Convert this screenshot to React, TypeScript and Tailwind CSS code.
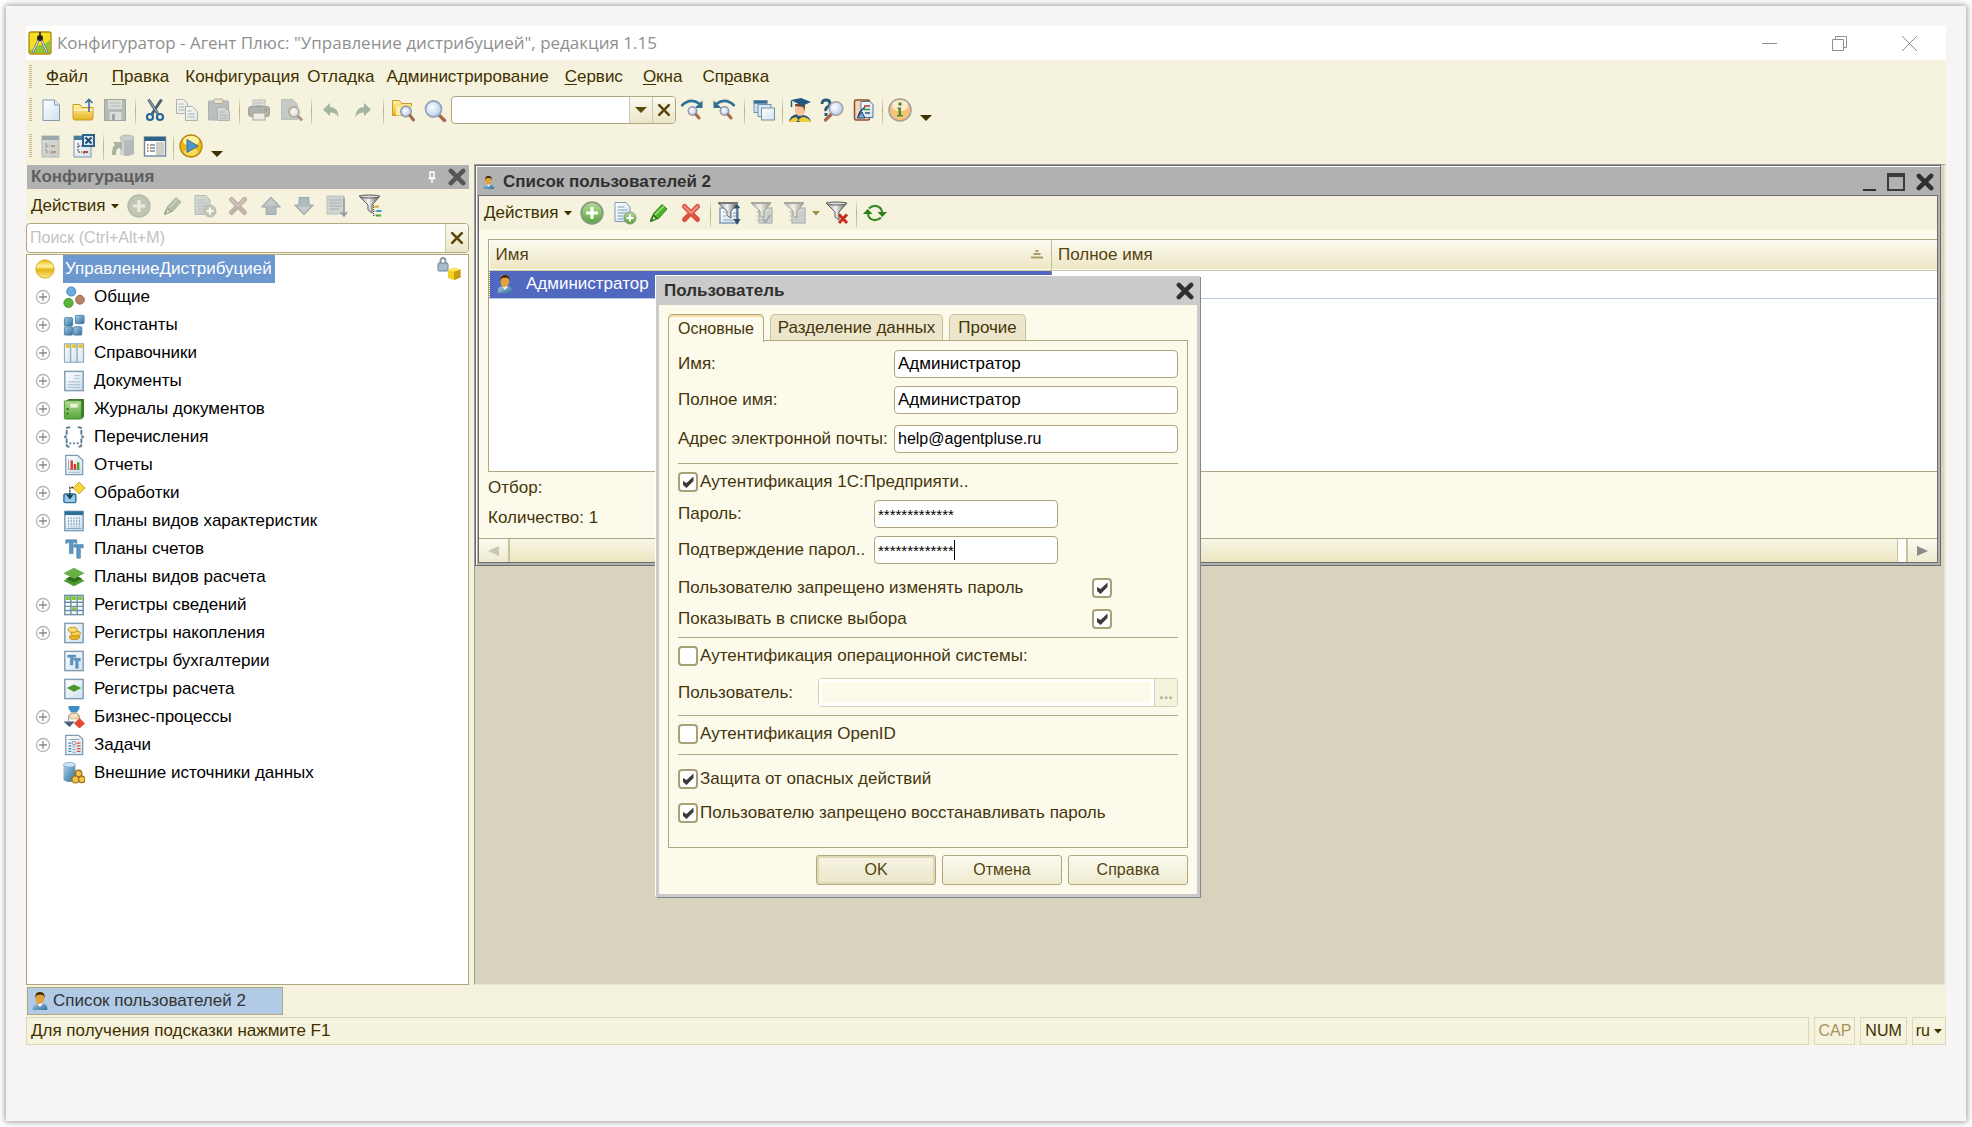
import type { ReactNode } from "react";

type IconProps = { muted?: boolean };

function Icon({ size = 24, muted, children }: { size?: number; muted?: boolean; children: ReactNode }) {
  return (
    <svg
      width={size}
      height={size}
      viewBox="0 0 24 24"
      fill="none"
      aria-hidden="true"
      className={muted ? "shrink-0 opacity-60 saturate-50" : "shrink-0"}
    >
      {children}
    </svg>
  );
}

/* ---------- shared gradients ---------- */

function Gradients() {
  return (
    <svg width="0" height="0" className="absolute" aria-hidden="true">
      <defs>
        <linearGradient id="g-page" x1="0" y1="0" x2="1" y2="1">
          <stop offset="0" stopColor="#ffffff" />
          <stop offset="1" stopColor="#cfe1ee" />
        </linearGradient>
        <linearGradient id="g-slate" x1="0" y1="0" x2="1" y2="1">
          <stop offset="0" stopColor="#c3cdd4" />
          <stop offset="1" stopColor="#a9b7c2" />
        </linearGradient>
        <linearGradient id="g-gold" x1="0" y1="0" x2="0" y2="1">
          <stop offset="0" stopColor="#fff3a8" />
          <stop offset="1" stopColor="#e6b422" />
        </linearGradient>
        <linearGradient id="g-steel" x1="0" y1="0" x2="1" y2="0">
          <stop offset="0" stopColor="#8d8d8d" />
          <stop offset="0.45" stopColor="#f4f4f4" />
          <stop offset="1" stopColor="#555555" />
        </linearGradient>
        <linearGradient id="g-green" x1="0" y1="0" x2="0" y2="1">
          <stop offset="0" stopColor="#b5dd95" />
          <stop offset="1" stopColor="#55a538" />
        </linearGradient>
        <linearGradient id="g-blue" x1="0" y1="0" x2="1" y2="1">
          <stop offset="0" stopColor="#a9cfe8" />
          <stop offset="1" stopColor="#2f6c9b" />
        </linearGradient>
        <linearGradient id="g-ball" x1="0" y1="0" x2="0" y2="1">
          <stop offset="0" stopColor="#e8b912" />
          <stop offset="0.35" stopColor="#fff3a0" />
          <stop offset="0.55" stopColor="#e3b413" />
          <stop offset="1" stopColor="#ffec8c" />
        </linearGradient>
        <radialGradient id="g-lens" cx="0.4" cy="0.4" r="0.7">
          <stop offset="0" stopColor="#ffffff" />
          <stop offset="1" stopColor="#a9c6ee" />
        </radialGradient>
      </defs>
    </svg>
  );
}

/* ---------- toolbar icons ---------- */

function AppIcon() {
  return (
    <Icon>
      <rect x="1" y="1" width="22" height="22" rx="2" fill="#f3df1f" stroke="#b48a14" strokeWidth="1.4" />
      <path d="M2 19c5 0 6-4 10-5 4-1 6-1 10-5v13H2z" fill="#8cc63a" />
      <path d="M11 8 5 21M13 8l6 13" stroke="#777" strokeWidth="2.4" strokeLinecap="round" />
      <path d="M11 8 5 21M13 8l6 13" stroke="#e8e8e8" strokeWidth="1" strokeLinecap="round" />
      <circle cx="12" cy="7" r="3" fill="#222" />
      <path d="M12 1v5" stroke="#222" strokeWidth="1.6" />
    </Icon>
  );
}

function NewFileIcon() {
  return (
    <Icon>
      <path d="M4 2h11.500l5 5v15.500H4z" fill="url(#g-page)" stroke="#7f9db3" />
      <path d="M15.500 2v5h5" fill="#e5eff6" stroke="#7f9db3" />
    </Icon>
  );
}

function OpenIcon() {
  return (
    <Icon>
      <path d="M2 6.500h7l2 3h11V20q0 2-2 2H4q-2 0-2-2z" fill="url(#g-gold)" stroke="#c99a2a" />
      <path d="M2.500 12h19" stroke="#fff7c8" strokeWidth="1.500" />
      <path d="M18 14V2M14.500 5 18 1.500 21.500 5" stroke="#3d6f93" strokeWidth="1.600" />
    </Icon>
  );
}

function SaveIcon({ muted }: IconProps) {
  return (
    <Icon muted={muted}>
      <rect x="1.500" y="1.500" width="21" height="21" fill="#7e97ab" stroke="#5d768a" />
      <rect x="5" y="2" width="14" height="9" fill="#c3ced6" />
      <path d="M6.500 5h11M6.500 8h11" stroke="#8498a8" />
      <rect x="6.500" y="14" width="12" height="8" fill="#c4d0d9" />
      <rect x="9" y="16" width="3" height="6" fill="#5d768a" />
    </Icon>
  );
}

function CutIcon() {
  return (
    <Icon>
      <path d="M5.500 1.500 15 16M18.500 1.500 9 16" stroke="#4c6273" strokeWidth="3" />
      <path d="M6 2l9 14" stroke="#a7b8c4" />
      <circle cx="7" cy="19" r="3" stroke="#25699b" strokeWidth="2.200" />
      <circle cx="17" cy="19" r="3" stroke="#25699b" strokeWidth="2.200" />
    </Icon>
  );
}

function CopyIcon({ muted }: IconProps) {
  return (
    <Icon muted={muted}>
      <path d="M1.500 1.500h7l4 4v10h-11z" fill="url(#g-page)" stroke="#6d8ca6" />
      <path d="M3.500 6h5M3.500 9h6M3.500 12h6" stroke="#5c8fb8" />
      <path d="M10.500 8.500h7l5 5v9h-12z" fill="url(#g-page)" stroke="#6d8ca6" />
      <path d="M12.500 13h4M12.500 16h7M12.500 19h7" stroke="#5c8fb8" />
    </Icon>
  );
}

function PasteIcon({ muted }: IconProps) {
  return (
    <Icon muted={muted}>
      <rect x="1.500" y="3" width="20" height="19" rx="1" fill="#8ba0b3" stroke="#718799" />
      <rect x="7" y="1" width="9" height="4.500" rx="1" fill="#e8d9a8" stroke="#8d7c50" />
      <path d="M10.500 9.500h7l5 4v9h-12z" fill="url(#g-slate)" stroke="#6d8ca6" />
      <path d="M12.500 14h5M12.500 17h7M12.500 20h7" stroke="#5c8fb8" />
    </Icon>
  );
}

function PrintIcon({ muted }: IconProps) {
  return (
    <Icon muted={muted}>
      <rect x="6" y="2" width="12" height="8" fill="#cbd3d8" stroke="#8b9aa6" />
      <path d="M8 5h8M8 7.500h8" stroke="#8b9aa6" />
      <rect x="1.500" y="8.500" width="21" height="10" rx="2.500" fill="#7b8a96" stroke="#5f6d78" />
      <circle cx="18.500" cy="12" r="1.500" fill="#c45b3b" />
      <rect x="6" y="15" width="12" height="7" fill="#e6eaf0" stroke="#a0704a" />
    </Icon>
  );
}

function PreviewIcon({ muted }: IconProps) {
  return (
    <Icon muted={muted}>
      <path d="M2.500 1.500h11l5 5v15h-16z" fill="#9fb2c0" stroke="#8ba2b3" />
      <circle cx="15" cy="14" r="5" fill="url(#g-lens)" stroke="#8d6f62" strokeWidth="1.600" />
      <path d="m19 18 4 4.500" stroke="#a0563a" strokeWidth="3" />
    </Icon>
  );
}

function UndoIcon({ flip }: { flip?: boolean }) {
  return (
    <Icon>
      <g transform={flip ? "translate(24 0) scale(-1 1)" : undefined}>
        <path d="M4 11.500 11 5v4q8.500 0 8.500 10.500-2-5-8.500-5V18z" fill="#a3b5a0" />
      </g>
    </Icon>
  );
}

function FindInFilesIcon() {
  return (
    <Icon>
      <path d="M1.500 2.500h7l2 3h10v12h-19z" fill="url(#g-gold)" stroke="#c99a2a" />
      <path d="M5 8.500h16v9h-16z" fill="#fdeeb0" />
      <circle cx="15" cy="13.500" r="5.200" fill="url(#g-lens)" stroke="#8f9dae" strokeWidth="1.600" />
      <path d="m19 17.500 3.500 4.500" stroke="#a4684f" strokeWidth="3" strokeLinecap="round" />
    </Icon>
  );
}

function FindIcon() {
  return (
    <Icon>
      <path d="m16 17 5.500 5.500" stroke="#a4684f" strokeWidth="3.400" strokeLinecap="round" />
      <circle cx="10.500" cy="11" r="8" fill="url(#g-lens)" stroke="#98a3b8" strokeWidth="1.800" />
    </Icon>
  );
}

function FindNextIcon({ flip }: { flip?: boolean }) {
  return (
    <Icon>
      <g transform={flip ? "translate(24 0) scale(-1 1)" : undefined}>
        <path d="M1.500 8Q10-1 20 6" stroke="#2f6f96" strokeWidth="2.600" />
        <path d="M22.500 2.500v7.500h-8z" fill="#2f6f96" />
      </g>
      <circle cx="12.500" cy="13" r="4.200" fill="url(#g-lens)" stroke="#9898b0" strokeWidth="1.600" />
      <path d="m16 16.500 3 3.500" stroke="#a4684f" strokeWidth="3" strokeLinecap="round" />
    </Icon>
  );
}

function WindowsIcon() {
  return (
    <Icon>
      <g stroke="#6f93ab">
        <rect x="2" y="2.500" width="13" height="12" fill="#cfe0ec" />
        <rect x="2" y="2.500" width="13" height="3" fill="#34688c" />
        <rect x="6" y="6.500" width="13" height="12" fill="#dbe9f2" />
        <rect x="9.500" y="10" width="13" height="12" fill="url(#g-page)" />
      </g>
    </Icon>
  );
}

function GraduateIcon() {
  return (
    <Icon>
      <path d="M1 24q1-7 8-8l6 1q7 1 8 7z" fill="#2c5672" />
      <path d="M1 24q2-4 7-5l4 5zM23 24q-3-5-9-5l-6 5z" fill="#f4cb3a" />
      <path d="M7 7h10v6q-1 5-5 5t-5-5z" fill="#f2c39c" />
      <path d="M17 8v5l-2-4-8-1V6h10z" fill="#7c4a26" />
      <path d="M3 2 13 0l10 4-9 4z" fill="#21597f" />
      <path d="M3.500 2.500V9" stroke="#21597f" strokeWidth="1.500" />
    </Icon>
  );
}

function SyntaxHelpIcon() {
  return (
    <Icon>
      <path d="M2 6q0-4 4-4t4 3.500q0 2-2.500 3.500T6 13" stroke="#27587a" strokeWidth="2.800" />
      <rect x="4.500" y="15" width="3" height="3" fill="#27587a" />
      <path d="m11.500 16-6 6" stroke="#a4684f" strokeWidth="3.200" strokeLinecap="round" />
      <circle cx="16" cy="10.500" r="6.800" fill="url(#g-lens)" stroke="#a7a1a8" strokeWidth="1.600" />
    </Icon>
  );
}

function TemplatesIcon() {
  return (
    <Icon>
      <rect x="2.500" y="2" width="15" height="20" rx="1.500" fill="#f2d5b8" stroke="#8c5330" strokeWidth="1.500" />
      <path d="M9 3.500h9l3 3v13H9z" fill="url(#g-page)" stroke="#4f7896" />
      <path d="M12 8h6" stroke="#d33b2f" strokeWidth="1.600" />
      <path d="M12 11.500h6" stroke="#3c9a3a" strokeWidth="1.600" />
      <path d="M13 15h5" stroke="#2f5c84" strokeWidth="1.600" />
      <path d="m6 19 2-5 5-5" stroke="#1d4a76" strokeWidth="1.600" />
      <path d="M5 20h8l-3-6z" fill="#7fa9cc" stroke="#1d4a76" />
    </Icon>
  );
}

function InfoIcon() {
  return (
    <Icon>
      <circle cx="12" cy="12" r="11" fill="#f7c37a" stroke="#a5a096" strokeWidth="1.600" />
      <ellipse cx="12" cy="7.500" rx="8" ry="5.500" fill="#fdebcf" />
      <circle cx="12" cy="6" r="1.800" fill="#4e8d2c" />
      <path d="M9.500 9.500H13V17h2v1.500H9V17h1.500v-6h-1z" fill="#4e8d2c" />
    </Icon>
  );
}

function ConfigTreeIcon({ muted, close }: IconProps & { close?: boolean }) {
  return (
    <Icon muted={muted}>
      <rect x="3" y="2" width="17" height="21" fill={muted ? "url(#g-slate)" : "url(#g-page)"} stroke="#7b98ad" />
      <rect x="3" y="2" width="17" height="4" fill="#4f7c9c" />
      <path d="M7 9v9h4M7 12h4M13 18v3" stroke="#444" strokeDasharray="2 1" />
      <path d="M12 12h4M12 18h5" stroke="#c0502e" strokeWidth="2" />
      {close && (
        <g>
          <rect x="11" y="0" width="13" height="13" fill="#2f6288" />
          <rect x="13" y="2" width="9" height="9" fill="#d7e7f2" />
          <path d="m14.500 3.500 6 6M20.500 3.500l-6 6" stroke="#1e4c70" strokeWidth="2" />
        </g>
      )}
    </Icon>
  );
}

function DbUpdateIcon({ muted }: IconProps) {
  return (
    <Icon muted={muted}>
      <path d="M9 4v16q6 4 14 0V4z" fill="#7c98b0" />
      <path d="M9 4v16q2 1.500 4 2V6z" fill="#b4c8d8" />
      <ellipse cx="16" cy="4" rx="7" ry="3" fill="#a3b9ca" stroke="#7c98b0" />
      <path d="M1 21Q1 12 4 11L2 8h9v8l-3-2q-3 0-3 7z" fill="#6f8f68" />
    </Icon>
  );
}

function FormIcon() {
  return (
    <Icon>
      <rect x="1.500" y="3" width="21" height="19" fill="#fff" stroke="#6c8ba2" strokeWidth="1.400" />
      <rect x="1.500" y="3" width="21" height="4" fill="#2e6387" />
      <rect x="13" y="8" width="8" height="13" fill="#d0cec4" />
      <path d="M4 11h1.500M4 14h1.500M4 17h1.500" stroke="#c05530" strokeWidth="1.400" />
      <path d="M7 11h5M7 14h5M7 17h5" stroke="#7d8b95" strokeWidth="1.400" />
    </Icon>
  );
}

function RunIcon() {
  return (
    <Icon>
      <circle cx="12" cy="12" r="11" fill="#eab913" stroke="#b98a16" strokeWidth="1.400" />
      <ellipse cx="12" cy="7" rx="8" ry="5" fill="#fdf0a0" />
      <ellipse cx="12" cy="18" rx="7" ry="3.500" fill="#f9dd5c" />
      <path d="M8 5.500v13l11-6.500z" fill="#4e96ca" stroke="#3a6f98" />
    </Icon>
  );
}

function AddIcon({ muted }: IconProps) {
  return (
    <Icon muted={muted}>
      <circle cx="12" cy="12" r="10.800" fill={muted ? "#93b088" : "url(#g-green)"} stroke="#8b9a86" strokeWidth="1.800" />
      <path d="M12 6v12M6 12h12" stroke={muted ? "#e2e8da" : "#fff"} strokeWidth="3.200" />
    </Icon>
  );
}

function EditIcon({ muted }: IconProps) {
  return (
    <Icon muted={muted}>
      <path d="m7 13 9-9.500 5 4.500-9 10z" fill={muted ? "#7fa074" : "#4bb427"} stroke={muted ? "#6f9062" : "#2f7f18"} />
      <path d="m9 14 9-9" stroke={muted ? "#a8c09f" : "#9be07c"} strokeWidth="1.400" />
      <path d="m7 13 5 5-7 3q-1.500 0-1-2z" fill={muted ? "#5f7f56" : "#2a7416"} />
      <path d="m7.500 15.500 2 2-3 1.500z" fill="#e6f5dc" />
    </Icon>
  );
}

function AddCopyIcon({ muted }: IconProps) {
  return (
    <Icon muted={muted}>
      <path d="M2 1.500h11l4 4.500v14.500H2z" fill={muted ? "url(#g-slate)" : "url(#g-page)"} stroke="#7d9bb0" />
      <path d="M4.500 6h7M4.500 9h10M4.500 12h9M4.500 15h6M4.500 18h6" stroke="#7da0b8" strokeWidth="1.200" />
      <circle cx="17" cy="17" r="6" fill={muted ? "#93b088" : "url(#g-green)"} stroke="#7c9a74" />
      <path d="M17 13.500v7M13.500 17h7" stroke="#fff" strokeWidth="2" />
    </Icon>
  );
}

function DeleteIcon({ muted }: IconProps) {
  return (
    <Icon muted={muted}>
      <path d="m5.500 5.500 13 13M18.500 5.500l-13 13" stroke={muted ? "#b0837e" : "#de5340"} strokeWidth="5" strokeLinecap="round" />
      <path d="m5.500 5.500 6.500 6.500 6.500-6.500" stroke={muted ? "#c9a09a" : "#f0907f"} strokeWidth="2" strokeLinecap="round" />
    </Icon>
  );
}

function ArrowIcon({ down }: { down?: boolean }) {
  return (
    <Icon muted>
      <g transform={down ? "translate(0 24) scale(1 -1)" : undefined}>
        <path d="m12 3 9.500 10H17v7.500H7V13H2.500z" fill="#6f9ac2" stroke="#557fa6" />
        <path d="m12 4.500 6 7H6z" fill="#94b4d0" />
      </g>
    </Icon>
  );
}

function SortIcon() {
  return (
    <Icon muted>
      <rect x="2" y="2" width="17" height="18" fill="#b0c2d0" stroke="#8ba5b9" />
      <path d="M4.500 6h12M4.500 9h12M4.500 12h12M4.500 15h10" stroke="#6888a0" />
      <path d="M19 4v17M16 18l3 4 3-4" stroke="#3d6890" strokeWidth="1.600" />
    </Icon>
  );
}

const FUNNEL = "M1 2h21l-8 9v8l-4-3v-5z";

function FunnelTreeIcon() {
  return (
    <Icon>
      <path d={FUNNEL} fill="url(#g-steel)" stroke="#5c5c5c" />
      <ellipse cx="11.500" cy="2.500" rx="10" ry="1.500" fill="#ddd" stroke="#5c5c5c" />
      <path d="M15.500 11v11M15.500 13h3M15.500 17h3M15.500 21h3" stroke="#555" strokeDasharray="1 1" />
      <path d="M17 12.500h4" stroke="#e0b020" strokeWidth="2" />
      <path d="M18.500 17h5" stroke="#3c97cf" strokeWidth="2" />
      <path d="M18 21.500h5" stroke="#49a83b" strokeWidth="2" />
    </Icon>
  );
}

function FunnelListIcon({ muted, variant }: IconProps & { variant: "sort" | "check" | "list" }) {
  return (
    <Icon muted={muted}>
      <rect
        x={variant === "sort" ? 3 : 9}
        y="7"
        width={variant === "sort" ? 18 : 13}
        height="15"
        fill={muted ? "url(#g-slate)" : "url(#g-page)"}
        stroke="#7d97ab"
        strokeWidth="1.400"
      />
      <path d="M6 11h3M6 15h3M6 19h12M16 12h4M16 15h4" stroke="#8da6b8" />
      <path d="M1 2h20l-7 8v7l-4-2.500V10z" fill="url(#g-steel)" stroke="#666" />
      <path d="M1 2h20" stroke="#777" strokeWidth="2" />
      {variant === "sort" && <path d="M20 5v14M17.500 18.500l2.500 4 2.500-4zM17.500 7 20 4l2.500 3" fill="#2c5270" stroke="#2c5270" strokeWidth="1.200" />}
      {variant === "check" && <path d="m13 18 2.500 3 5-7" stroke="#5b7f9b" strokeWidth="2" />}
    </Icon>
  );
}

function FunnelClearIcon() {
  return (
    <Icon>
      <path d={FUNNEL} fill="url(#g-steel)" stroke="#5c5c5c" />
      <ellipse cx="11.500" cy="2.500" rx="10" ry="1.500" fill="#ddd" stroke="#5c5c5c" />
      <path d="m14 13.500 8 8.500M22 13.500 14 22" stroke="#cc2b20" strokeWidth="3" />
    </Icon>
  );
}

function RefreshIcon() {
  return (
    <Icon>
      <path d="M6 7.500Q9 4.500 13 5q5.500 1 6 6" stroke="#388a22" strokeWidth="2.200" />
      <path d="M18 16.500Q15 19.500 11 19 5.500 18 5 13" stroke="#388a22" strokeWidth="2.200" />
      <path d="M14.500 11H24l-4.700 5zM0 13h9.500L4.700 8z" fill="#2f7f1c" />
    </Icon>
  );
}

function UserIcon({ size = 18 }: { size?: number }) {
  return (
    <Icon size={size}>
      <path d="M2 24q0-8 6-9h8q6 1 6 9z" fill="url(#g-blue)" />
      <path d="m8 15 4 5 4-5z" fill="#fff" />
      <path d="M12 0q6 0 6 7t-6 9-6-9 6-7" fill="#e3a13c" />
      <path d="M6 8Q5 0 12 0t6 8q-1-4-3-4.500H9Q7 4 6 8" fill="#3b2a18" />
    </Icon>
  );
}

/* ---------- metadata tree icons ---------- */

const page = <rect x="2" y="1.500" width="20" height="21" fill="url(#g-page)" stroke="#7f9db3" strokeWidth="1.600" />;

const bookkeeping = (
  <g fill="#5b97c2" stroke="#3b77a2" strokeWidth="0.600">
    <path d="M3 2h12v4h-1V5h-3v12H7V5H4v1H3z" />
    <path d="M12 7h10v4h-1.500v-1H19v12h-4V10h-3z" />
  </g>
);

const treeIcons: Record<string, ReactNode> = {
  common: (
    <g>
      <circle cx="9" cy="6" r="5" fill="#6baadb" stroke="#4583b5" />
      <circle cx="18.500" cy="15" r="4.800" fill="#b58468" stroke="#94654c" />
      <circle cx="6" cy="18.500" r="5" fill="#5cb53a" stroke="#3d8f20" />
    </g>
  ),
  constants: (
    <g fill="url(#g-blue)" stroke="#4a7fa5">
      <rect x="1.500" y="4" width="9" height="9" rx="1" />
      <rect x="13.500" y="1.500" width="9.500" height="9" rx="1" />
      <rect x="1.500" y="14" width="9" height="9" rx="1" />
      <rect x="11.500" y="14" width="9" height="9" rx="1" />
    </g>
  ),
  catalogs: (
    <g stroke="#7f9db3">
      <rect x="1.500" y="2" width="7" height="20" fill="url(#g-page)" />
      <rect x="8.500" y="2" width="7" height="20" fill="url(#g-page)" />
      <rect x="15.500" y="2" width="7" height="20" fill="url(#g-page)" />
      <path d="M3 4.500h4.500M10 4.500h4.500M17 4.500h4.500" stroke="#e6bf1c" strokeWidth="3.500" />
    </g>
  ),
  documents: (
    <g>
      {page}
      <path d="M12 6h7M12 9h7M5 13h14M5 16h14M5 19h14" stroke="#b4c6d3" strokeWidth="1.200" />
    </g>
  ),
  journals: (
    <g>
      <path d="M4 3 6 1h17v19l-2 3z" fill="#3b7c2e" />
      <rect x="1.500" y="3" width="18.500" height="20" rx="1" fill="url(#g-green)" stroke="#3f8a2c" />
      <rect x="8" y="6.500" width="8" height="4" fill="#e5f3dc" />
      <path d="M4 12h2M4 17h2" stroke="#2c6420" strokeWidth="2" />
    </g>
  ),
  enums: (
    <g stroke="#55798f" strokeWidth="2">
      <path d="M8 1.500H5.500Q4 1.500 4 4v5q0 2.500-2.500 3Q4 12.500 4 15v5q0 2.500 1.500 2.500H8" strokeDasharray="5 1" />
      <path d="M16 1.500h2.500Q20 1.500 20 4v5q0 2.500 2.500 3Q20 12.500 20 15v5q0 2.500-1.500 2.500H16" strokeDasharray="5 1" />
      <path d="M7 19h2M11 19h2M15 19h2" />
    </g>
  ),
  reports: (
    <g>
      <path d="M3 1.500h13l5.500 5v16H3z" fill="url(#g-page)" stroke="#7f9db3" strokeWidth="1.400" />
      <path d="M6 6v11h13" stroke="#8ca5b7" />
      <path d="M9.500 7v10" stroke="#dc3b2c" strokeWidth="2.600" />
      <path d="M13 11v6" stroke="#dc3b2c" strokeWidth="2.600" />
      <path d="M16.500 9v8" stroke="#46a02c" strokeWidth="2.600" />
      <path d="M6 20h12" stroke="#a5b9c8" />
    </g>
  ),
  processors: (
    <g>
      <path d="m17.500 0 6.500 6.500-6.500 6.500L11 6.500z" fill="#f7d640" stroke="#c9a227" />
      <rect x="1" y="13" width="13" height="9.500" rx="1.500" fill="#9cc9e8" stroke="#2f709c" strokeWidth="1.600" />
      <path d="M11 6H7.500v8" stroke="#222" strokeWidth="1.400" strokeDasharray="2 1" />
      <path d="M3.500 14h8l-4 5z" fill="#173f5e" />
    </g>
  ),
  characteristics: (
    <g>
      {page}
      <rect x="2" y="1.500" width="20" height="4" fill="#2e6c99" />
      <path d="M6 8v10M9 8v10M12 8v10M15 8v10M18 8v10" stroke="#6b95b3" strokeDasharray="2 1" />
      <path d="M4 20h16" stroke="#6b95b3" />
    </g>
  ),
  accounts: bookkeeping,
  calculations: (
    <g>
      <path d="m12 10 11.500 6L12 22 .5 16z" fill="#4f9a30" />
      <path d="m12 9 9 5-9 4-9-4z" fill="#2f6c1a" />
      <path d="m12 2 11.500 6L12 14 .5 8z" fill="#68b045" />
    </g>
  ),
  infoRegs: (
    <g>
      <rect x="2" y="1.500" width="20" height="21" fill="#fff" stroke="#6d8fa5" strokeWidth="1.600" />
      <path d="M2 9h20M2 13.500h20M2 18h20M8.500 2v20M15.500 2v20" stroke="#6d8fa5" strokeWidth="1.600" />
      <path d="M3 4.500h5M9.500 4.500h5M16.500 4.500h4.500" stroke="#82c841" strokeWidth="4" />
      <path d="M9.500 16h5" stroke="#82c841" strokeWidth="3" />
    </g>
  ),
  accumRegs: (
    <g>
      {page}
      <ellipse cx="12.500" cy="16.500" rx="5.500" ry="2.600" fill="#e5b421" stroke="#c18a15" />
      <ellipse cx="14" cy="12.500" rx="5" ry="2.600" fill="#f4d152" stroke="#c18a15" />
      <ellipse cx="10.500" cy="8.500" rx="5" ry="2.800" fill="#f8de6f" stroke="#c18a15" />
    </g>
  ),
  accountRegs: (
    <g>
      {page}
      <g transform="translate(3 4) scale(0.720)">{bookkeeping}</g>
    </g>
  ),
  calcRegs: (
    <g>
      {page}
      <path d="m12 7 8 4-8 4-8-4z" fill="#4c9a2c" />
    </g>
  ),
  processes: (
    <g>
      <path d="M12 7v4M6 12q0-3 6-3t6 3v4M6 12v5" stroke="#9aa" strokeWidth="1.400" />
      <path d="M6 0h12v3l-3 4H9L6 3z" fill="#3f8fc7" />
      <rect x="7.500" y="8" width="9" height="6" rx="1" fill="#fbe3bd" stroke="#caa774" />
      <path d="M.5 17H13l-6 6z" fill="#46647a" />
      <path d="m18 13 6 6-6 5.500-6-5.500z" fill="#e2492f" />
    </g>
  ),
  tasks: (
    <g>
      <path d="M3 1.500h14l4.500 4v17H3z" fill="url(#g-page)" stroke="#7f9db3" strokeWidth="1.400" />
      <path d="M6 6h12" stroke="#8b9aa6" />
      <circle cx="12" cy="10" r="2" stroke="#888" />
      <path d="M6 10h3M6 13h3M6 16h3M6 19h3" stroke="#4b83ac" strokeWidth="1.500" />
      <path d="M15 10h4M15 13h4M15 16h4M15 19h4" stroke="#d65442" strokeWidth="1.500" />
      <path d="M10.500 14h3M10.500 17h3M10.500 20h3" stroke="#8b9aa6" />
    </g>
  ),
  external: (
    <g>
      <path d="M.5 3v17q6 3.500 13 0V3z" fill="url(#g-blue)" />
      <ellipse cx="7" cy="3" rx="6.500" ry="2.500" fill="#cfe4f2" stroke="#83aeca" />
      <g fill="#f3c64a" stroke="#9c6f16" strokeWidth="1.400">
        <circle cx="17" cy="12.500" r="3.500" />
        <circle cx="13.500" cy="19" r="3.800" />
        <circle cx="20.500" cy="19" r="3.500" />
      </g>
    </g>
  ),
};

const tree = [
  { label: "Общие", icon: "common", expandable: true },
  { label: "Константы", icon: "constants", expandable: true },
  { label: "Справочники", icon: "catalogs", expandable: true },
  { label: "Документы", icon: "documents", expandable: true },
  { label: "Журналы документов", icon: "journals", expandable: true },
  { label: "Перечисления", icon: "enums", expandable: true },
  { label: "Отчеты", icon: "reports", expandable: true },
  { label: "Обработки", icon: "processors", expandable: true },
  { label: "Планы видов характеристик", icon: "characteristics", expandable: true },
  { label: "Планы счетов", icon: "accounts", expandable: false },
  { label: "Планы видов расчета", icon: "calculations", expandable: false },
  { label: "Регистры сведений", icon: "infoRegs", expandable: true },
  { label: "Регистры накопления", icon: "accumRegs", expandable: true },
  { label: "Регистры бухгалтерии", icon: "accountRegs", expandable: false },
  { label: "Регистры расчета", icon: "calcRegs", expandable: false },
  { label: "Бизнес-процессы", icon: "processes", expandable: true },
  { label: "Задачи", icon: "tasks", expandable: true },
  { label: "Внешние источники данных", icon: "external", expandable: false },
];

/* ---------- small building blocks ---------- */

function ToolButton({ label, children }: { label: string; children: ReactNode }) {
  return (
    <button type="button" aria-label={label} className="flex h-8 w-8 shrink-0 items-center justify-center">
      {children}
    </button>
  );
}

function Separator({ narrow }: { narrow?: boolean }) {
  return (
    <span className={narrow ? "flex w-1 shrink-0 items-center justify-center" : "flex w-2 shrink-0 items-center justify-center"}>
      <span className="h-7 w-px bg-linear-to-b from-[#f5f2dd] via-[#b9b08c] to-[#d8d3b8]" />
    </span>
  );
}

function Grip() {
  return <span className="ml-[3px] h-6 w-[3px] shrink-0 bg-[repeating-linear-gradient(to_bottom,#c2b991_0px,#c2b991_1px,transparent_1px,transparent_2px)]" />;
}

function Caret({ className = "text-[#3f3000]" }: { className?: string }) {
  return (
    <svg width="8" height="5" viewBox="0 0 8 5" aria-hidden="true" className={className}>
      <path d="M0 0h8L4 4.500z" fill="currentColor" />
    </svg>
  );
}

function MoreArrow() {
  return (
    <button type="button" aria-label="Параметры панели" className="mt-4 ml-0.5 flex h-3 w-4 items-center justify-center">
      <svg width="12" height="6" viewBox="0 0 12 6" aria-hidden="true">
        <path d="M0 0h12L6 6z" fill="#3f3000" />
      </svg>
    </button>
  );
}

function Cross({ size, color, width = 4 }: { size: number; color: string; width?: number }) {
  return (
    <svg width={size} height={size} viewBox="0 0 16 16" aria-hidden="true">
      <path d="m2.500 2.500 11 11M13.500 2.500l-11 11" stroke={color} strokeWidth={width} strokeLinecap="round" />
    </svg>
  );
}

function CheckBox({ id, checked }: { id: string; checked?: boolean }) {
  return (
    <span className="relative h-5 w-5 shrink-0">
      <input
        id={id}
        type="checkbox"
        defaultChecked={checked}
        className="peer block h-5 w-5 appearance-none rounded-[4px] border-2 border-[#aaa078] bg-white"
      />
      <svg
        viewBox="0 0 20 20"
        aria-hidden="true"
        className="pointer-events-none absolute inset-0 hidden h-5 w-5 peer-checked:block"
      >
        <path d="M5 9v4l3.500 3L15.500 9V4.500l-7 6.500z" fill="#3d3a38" />
      </svg>
    </span>
  );
}

function Field({ id, label, value, className }: { id: string; label: string; value: string; className: string }) {
  return (
    <div className={"flex items-center justify-between " + className}>
      <label htmlFor={id}>{label}</label>
      <input id={id} defaultValue={value} className="h-7 w-[284px] rounded-[4px] border border-[#b0a67f] bg-white px-[3px] text-black" />
    </div>
  );
}

function DialogButton({ children, primary }: { children: ReactNode; primary?: boolean }) {
  return (
    <button
      type="button"
      className={
        primary
          ? "h-[30px] w-[120px] rounded-[3px] border border-[#b0a67f] bg-linear-to-b from-[#f6f4e4] to-[#eae6c8] text-base text-[#54430f] shadow-[inset_0_0_0_2px_#dfd8b4]"
          : "h-[30px] w-[120px] rounded-[3px] border border-[#b0a67f] bg-linear-to-b from-[#fbfaf0] to-[#eeebd0] text-base text-[#54430f]"
      }
    >
      {children}
    </button>
  );
}

/* ---------- top of the window ---------- */

function TitleBar() {
  return (
    <header className="flex h-[34px] shrink-0 items-center bg-white pl-0.5">
      <AppIcon />
      <h1 className="ml-[5px] flex-1 font-['Open_Sans','Noto_Sans',sans-serif] text-[17px] text-[#8f8f8f]">
        Конфигуратор - Агент Плюс: "Управление дистрибуцией", редакция 1.15
      </h1>
      <div className="flex pr-0.5">
        <button type="button" aria-label="Свернуть" className="flex h-8 w-[70px] items-center justify-center">
          <span className="h-px w-[15px] bg-[#8f8f8f]" />
        </button>
        <button type="button" aria-label="Развернуть" className="flex h-8 w-[70px] items-center justify-center">
          <svg width="15" height="15" viewBox="0 0 15 15" fill="none" stroke="#8f8f8f" aria-hidden="true">
            <path d="M.5 3.500h11v11H.5zM3.500 3V.5h11v11H12" />
          </svg>
        </button>
        <button type="button" aria-label="Закрыть" className="flex h-8 w-[70px] items-center justify-center">
          <svg width="15" height="15" viewBox="0 0 15 15" stroke="#8f8f8f" aria-hidden="true">
            <path d="m0 0 15 15M15 0 0 15" />
          </svg>
        </button>
      </div>
    </header>
  );
}

function MenuBar() {
  return (
    <nav className="flex h-[34px] shrink-0 items-center text-[#3f3000]">
      <Grip />
      <div className="flex pl-[14px] [&_u]:underline-offset-2">
        <button type="button" className="mr-6"><u>Ф</u>айл</button>
        <button type="button" className="mr-4"><u>П</u>равка</button>
        <button type="button" className="mr-2">Конфигурация</button>
        <button type="button" className="mr-3">Отладка</button>
        <button type="button" className="mr-4">Администрирование</button>
        <button type="button" className="mr-5"><u>С</u>ервис</button>
        <button type="button" className="mr-5"><u>О</u>кна</button>
        <button type="button">Сп<u>р</u>авка</button>
      </div>
    </nav>
  );
}

function MainToolbar() {
  return (
    <div className="flex h-8 shrink-0 items-center">
      <Grip />
      <div className="flex items-center pl-[3px]">
        <ToolButton label="Новый"><NewFileIcon /></ToolButton>
        <ToolButton label="Открыть"><OpenIcon /></ToolButton>
        <ToolButton label="Сохранить"><SaveIcon muted /></ToolButton>
        <Separator />
        <ToolButton label="Вырезать"><CutIcon /></ToolButton>
        <ToolButton label="Копировать"><CopyIcon muted /></ToolButton>
        <ToolButton label="Вставить"><PasteIcon muted /></ToolButton>
        <Separator />
        <ToolButton label="Печать"><PrintIcon muted /></ToolButton>
        <ToolButton label="Просмотр"><PreviewIcon muted /></ToolButton>
        <Separator />
        <ToolButton label="Отменить"><UndoIcon /></ToolButton>
        <ToolButton label="Повторить"><UndoIcon flip /></ToolButton>
        <Separator />
        <ToolButton label="Искать в файлах"><FindInFilesIcon /></ToolButton>
        <ToolButton label="Найти"><FindIcon /></ToolButton>
        <div className="flex h-7 w-[225px] overflow-hidden rounded-[4px] border border-[#b0a67f] bg-white">
          <input aria-label="Строка поиска" className="min-w-0 flex-1 px-1 outline-none" />
          <button type="button" aria-label="Список" className="flex w-[23px] items-center justify-center border-l border-[#cfc8a5] bg-linear-to-b from-[#fbfaf0] to-[#eae6c8]">
            <svg width="12" height="6" viewBox="0 0 12 6" aria-hidden="true"><path d="M0 0h12L6 6z" fill="#5c4a0b" /></svg>
          </button>
          <button type="button" aria-label="Очистить" className="flex w-[23px] items-center justify-center border-l border-[#cfc8a5] bg-linear-to-b from-[#fbfaf0] to-[#eae6c8]">
            <Cross size={14} color="#5c4a0b" width={3} />
          </button>
        </div>
        <ToolButton label="Найти далее"><FindNextIcon /></ToolButton>
        <ToolButton label="Найти ранее"><FindNextIcon flip /></ToolButton>
        <Separator />
        <ToolButton label="Окна"><WindowsIcon /></ToolButton>
        <Separator narrow />
        <ToolButton label="Содержание справки"><GraduateIcon /></ToolButton>
        <ToolButton label="Поиск в справке"><SyntaxHelpIcon /></ToolButton>
        <ToolButton label="Шаблоны"><TemplatesIcon /></ToolButton>
        <Separator narrow />
        <ToolButton label="О программе"><InfoIcon /></ToolButton>
        <MoreArrow />
      </div>
    </div>
  );
}

function ConfigToolbar() {
  return (
    <div className="mt-1 mb-0.5 flex h-8 shrink-0 items-center">
      <Grip />
      <div className="flex items-center pl-[3px]">
        <ToolButton label="Открыть конфигурацию"><ConfigTreeIcon muted /></ToolButton>
        <ToolButton label="Закрыть конфигурацию"><ConfigTreeIcon close /></ToolButton>
        <Separator />
        <ToolButton label="Обновить базу данных"><DbUpdateIcon muted /></ToolButton>
        <ToolButton label="Окно конфигурации"><FormIcon /></ToolButton>
        <Separator narrow />
        <ToolButton label="Начать отладку"><RunIcon /></ToolButton>
        <MoreArrow />
      </div>
    </div>
  );
}

/* ---------- configuration panel ---------- */

function ConfigPanel() {
  return (
    <aside className="flex w-[443px] shrink-0 flex-col pt-px">
      <div className="ml-px flex h-6 shrink-0 items-center bg-[#b1b1b1] pl-1 pr-[3px] font-bold text-[#5e5e5e]">
        <h2 className="flex-1">Конфигурация</h2>
        <button type="button" aria-label="Закрепить" className="mr-3">
          <svg width="8" height="12" viewBox="0 0 8 12" fill="none" stroke="#fff" strokeWidth="1.500" aria-hidden="true">
            <path d="M2 1h4v6H2zM.5 7.500h7M4 8v4" />
          </svg>
        </button>
        <button type="button" aria-label="Закрыть панель">
          <Cross size={18} color="#555" />
        </button>
      </div>

      <div className="flex h-[34px] shrink-0 items-center pl-[5px] text-[#3f3000]">
        <button type="button" className="mr-1 flex items-center gap-1.5">
          Действия
          <Caret />
        </button>
        <div className="flex gap-px">
          <ToolButton label="Добавить"><AddIcon muted /></ToolButton>
          <ToolButton label="Изменить"><EditIcon muted /></ToolButton>
          <ToolButton label="Скопировать"><AddCopyIcon muted /></ToolButton>
          <ToolButton label="Удалить"><DeleteIcon muted /></ToolButton>
          <ToolButton label="Вверх"><ArrowIcon /></ToolButton>
          <ToolButton label="Вниз"><ArrowIcon down /></ToolButton>
          <ToolButton label="Упорядочить"><SortIcon /></ToolButton>
          <ToolButton label="Отбор по подсистемам"><FunnelTreeIcon /></ToolButton>
        </div>
      </div>

      <div className="flex h-[30px] shrink-0 overflow-hidden rounded-[4px] border border-[#b0a67f] bg-white">
        <input aria-label="Поиск" placeholder="Поиск (Ctrl+Alt+M)" className="min-w-0 flex-1 px-[3px] text-base outline-none placeholder:text-[#c2c2c2]" />
        <button type="button" aria-label="Очистить поиск" className="flex w-[23px] items-center justify-center border-l border-[#cfc8a5] bg-linear-to-b from-[#fbfaf0] to-[#eae6c8]">
          <Cross size={14} color="#5c4a0b" width={3} />
        </button>
      </div>

      <div className="mt-px min-h-0 flex-1 overflow-hidden border border-[#b0a67f] bg-white text-black">
        <div className="flex h-7 items-center pl-2">
          <Icon size={20}>
            <circle cx="12" cy="12" r="11" fill="url(#g-ball)" stroke="#cda11a" />
          </Icon>
          <span className="ml-2 flex h-7 items-center bg-[#6d97cf] pl-[2px] pr-[3px] text-white">УправлениеДистрибуцией</span>
          <svg width="24" height="24" viewBox="0 0 24 24" fill="none" aria-hidden="true" className="mr-[7px] ml-auto">
            <path d="M3.500 8V4q0-3 2.500-3t2.500 3v4" stroke="#8494a0" strokeWidth="1.800" />
            <rect x="1" y="6" width="10" height="8" rx="1" fill="#a9bccb" stroke="#6e8597" />
            <path d="m11 13 6-2.500 6.500 2v8L17 23l-6-2z" fill="#f5cf1f" />
            <path d="m17 14.500 6.500-2v8L17 23z" fill="#c99a12" />
            <path d="m11 13 6-2.500 6.500 2-6.500 2z" fill="#fbe96a" />
          </svg>
        </div>
        <ul>
          {tree.map((node) => (
            <li key={node.icon} className="flex h-7 items-center pl-2">
              <span className="w-7">
                {node.expandable && (
                  <svg width="16" height="16" viewBox="0 0 16 16" fill="none" aria-hidden="true">
                    <circle cx="8" cy="8" r="6.500" stroke="#b4b4b4" strokeWidth="1.300" />
                    <path d="M8 4v8M4 8h8" stroke="#8c8c8c" strokeWidth="1.300" />
                  </svg>
                )}
              </span>
              <Icon size={22}>{treeIcons[node.icon]}</Icon>
              <span className="ml-[9px]">{node.label}</span>
            </li>
          ))}
        </ul>
      </div>
    </aside>
  );
}

/* ---------- user list window ---------- */

function UserListWindow() {
  return (
    <section className="absolute top-0 right-[3px] left-0 flex h-[401px] flex-col border border-[#6b6b6b] bg-[#b1b1b1] p-[2px] pt-0 shadow-[inset_1px_1px_0_#fff]">
      <div className="flex h-[29px] shrink-0 items-center pt-[3px] pr-1 pl-1 font-bold text-[#303030]">
        <UserIcon size={13} />
        <h2 className="ml-2 flex-1">Список пользователей 2</h2>
        <div className="flex items-center gap-[11px]">
          <button type="button" aria-label="Свернуть окно" className="flex h-[18px] items-end">
            <span className="h-[2px] w-[13px] bg-[#303030]" />
          </button>
          <button type="button" aria-label="Развернуть окно" className="h-[18px] w-[18px] border-2 border-t-4 border-[#3b3b3b]" />
          <button type="button" aria-label="Закрыть окно">
            <Cross size={18} color="#303030" />
          </button>
        </div>
      </div>

      <div className="flex min-h-0 flex-1 flex-col border border-[#6b6b6b] bg-[#fcfaeb] text-[#44350b]">
        <div className="flex h-[34px] shrink-0 items-center bg-[#f5f2dd] pl-[5px] text-[#3f3000]">
          <button type="button" className="mr-1 flex items-center gap-1.5">
            Действия
            <Caret />
          </button>
          <div className="flex gap-px">
            <ToolButton label="Добавить"><AddIcon /></ToolButton>
            <ToolButton label="Скопировать"><AddCopyIcon /></ToolButton>
            <ToolButton label="Изменить"><EditIcon /></ToolButton>
            <ToolButton label="Удалить"><DeleteIcon /></ToolButton>
            <Separator narrow />
            <ToolButton label="Отбор и сортировка"><FunnelListIcon variant="sort" /></ToolButton>
            <ToolButton label="Отбор по значению"><FunnelListIcon variant="check" muted /></ToolButton>
            <ToolButton label="История отборов"><FunnelListIcon variant="list" muted /></ToolButton>
            <span className="flex w-2 items-center"><Caret className="text-[#a08e50]" /></span>
            <ToolButton label="Отключить отбор"><FunnelClearIcon /></ToolButton>
            <Separator narrow />
            <ToolButton label="Обновить"><RefreshIcon /></ToolButton>
          </div>
        </div>

        <div className="mt-[9px] ml-[9px] h-[233px] shrink-0 border-y border-l border-[#b0a67f] bg-white">
          <table className="w-full table-fixed border-collapse text-left">
            <thead>
              <tr className="h-[30px] border-b border-[#cfc8a5] bg-linear-to-b from-[#fbfaf2] to-[#eee7c4] text-[#54430f]">
                <th scope="col" className="w-[562px] border-r border-[#c3bb95] p-0 pr-2 pl-1.5 font-normal">
                  <span className="flex items-center justify-between">
                    Имя
                    <svg width="12" height="9" viewBox="0 0 12 9" aria-hidden="true">
                      <path d="M4.500 1h3M2.500 4h7M0 7.500h12" stroke="#a99c67" strokeWidth="2" />
                    </svg>
                  </span>
                </th>
                <th scope="col" className="p-0 pl-1.5 font-normal">Полное имя</th>
              </tr>
            </thead>
            <tbody>
              <tr className="h-7 border-b border-[#b9cade]">
                <td className="border border-dotted border-[#b79b52] bg-[#5168c1] p-0 text-white">
                  <span className="flex items-center pl-1.5">
                    <UserIcon />
                    <span className="ml-3">Администратор</span>
                  </span>
                </td>
                <td />
              </tr>
            </tbody>
          </table>
        </div>

        <div className="flex flex-1 flex-col gap-1.5 pt-1 pl-[9px]">
          <p className="leading-6">Отбор:</p>
          <p className="leading-6">Количество: 1</p>
        </div>

        <div className="flex h-6 shrink-0 border-t border-[#b0a67f] bg-[#fdfcf6]">
          <button type="button" aria-label="Прокрутить влево" className="flex w-[31px] items-center justify-center border-r-2 border-[#cac29c] bg-linear-to-b from-[#fbfaf0] to-[#eeebd0]">
            <svg width="11" height="10" viewBox="0 0 11 10" aria-hidden="true"><path d="M11 0v10L0 5z" fill="#c9c6b4" /></svg>
          </button>
          <div className="flex-1 border-r border-[#cac29c] bg-linear-to-b from-[#f8f6e6] to-[#ebe5bf]" />
          <div className="w-2" />
          <button type="button" aria-label="Прокрутить вправо" className="flex w-[31px] items-center justify-center border-l-2 border-[#cac29c] bg-linear-to-b from-[#fbfaf0] to-[#eeebd0]">
            <svg width="11" height="10" viewBox="0 0 11 10" aria-hidden="true"><path d="M0 0v10l11-5z" fill="#8a8a88" /></svg>
          </button>
        </div>
      </div>
    </section>
  );
}

/* ---------- user dialog ---------- */

function UserDialog() {
  return (
    <section
      role="dialog"
      aria-label="Пользователь"
      className="absolute top-[111px] left-[181px] flex h-[621px] w-[544px] flex-col border-[3px] border-t-0 border-[#cbcbcb] bg-[#fcfaeb] text-[#44350b] shadow-[1px_1px_0_#85858a,-1px_-1px_0_#fff]"
    >
      <div className="flex h-[29px] shrink-0 items-center justify-between bg-[#cbcbcb] pr-[3px] pl-[5px] font-bold text-[#303030]">
        <h2>Пользователь</h2>
        <button type="button" aria-label="Закрыть">
          <Cross size={18} color="#303030" />
        </button>
      </div>

      <div className="flex flex-1 flex-col px-[9px] pt-[9px]">
        <div role="tablist" className="flex h-[27px] shrink-0 gap-1.5">
          <button type="button" role="tab" aria-selected="true" className="z-10 -mb-px w-24 rounded-t-[5px] border border-b-0 border-[#b0a67f] bg-[#fcfaeb] text-base shadow-[inset_0_2px_0_#f7dfa0]">
            Основные
          </button>
          <button type="button" role="tab" aria-selected="false" className="w-[173px] rounded-t-[5px] border border-b-0 border-[#c9c09b] bg-[#ece6cd]">
            Разделение данных
          </button>
          <button type="button" role="tab" aria-selected="false" className="w-[77px] rounded-t-[5px] border border-b-0 border-[#c9c09b] bg-[#ece6cd]">
            Прочие
          </button>
        </div>

        <div role="tabpanel" className="-mt-px h-[508px] shrink-0 border border-[#b0a67f] px-[9px]">
          <Field id="name" label="Имя:" value="Администратор" className="mt-[9px]" />
          <Field id="full-name" label="Полное имя:" value="Администратор" className="mt-2" />
          <Field id="mail" label="Адрес электронной почты:" value="help@agentpluse.ru" className="mt-[11px] [&_input]:text-base" />

          <div className="mt-[10px] border-t border-[#b0a67f] pt-2">
            <div className="flex h-5 items-center gap-[2px]">
              <CheckBox id="auth-1c" checked />
              <label htmlFor="auth-1c">Аутентификация 1С:Предприяти..</label>
            </div>
            <div className="mt-2 flex items-center">
              <label htmlFor="password" className="w-[196px]">Пароль:</label>
              <input id="password" defaultValue="*************" className="h-7 w-[184px] rounded-[4px] border border-[#b0a67f] bg-white px-[3px] text-[15px] text-black" />
            </div>
            <div className="mt-2 flex items-center">
              <label htmlFor="password-again" className="w-[196px]">Подтверждение парол..</label>
              <span className="relative">
                <input id="password-again" defaultValue="*************" className="block h-7 w-[184px] rounded-[4px] border border-[#b0a67f] bg-white px-[3px] text-[15px] text-black" />
                <span className="absolute top-1 left-20 h-5 w-px bg-black" />
              </span>
            </div>
            <div className="mt-[14px] flex h-5 items-center">
              <label htmlFor="no-change" className="w-[414px]">Пользователю запрещено изменять пароль</label>
              <CheckBox id="no-change" checked />
            </div>
            <div className="mt-[11px] flex h-5 items-center">
              <label htmlFor="show-in-list" className="w-[414px]">Показывать в списке выбора</label>
              <CheckBox id="show-in-list" checked />
            </div>
          </div>

          <div className="mt-2 border-t border-[#b0a67f] pt-2">
            <div className="flex h-5 items-center gap-[2px]">
              <CheckBox id="auth-os" />
              <label htmlFor="auth-os">Аутентификация операционной системы:</label>
            </div>
            <div className="mt-3 flex items-center justify-between">
              <label htmlFor="os-user">Пользователь:</label>
              <div className="flex h-[29px] w-[360px] overflow-hidden rounded-[4px] border border-[#d5cfb3]">
                <input id="os-user" disabled className="min-w-0 flex-1 border-[3px] border-white bg-[#fcfaeb]" />
                <button type="button" disabled aria-label="Выбрать пользователя" className="flex w-[23px] items-end justify-center border-l border-[#d5cfb3] bg-[#f5f2dd] pb-1 font-bold leading-4 text-[#b8b199]">
                  ...
                </button>
              </div>
            </div>
          </div>

          <div className="mt-2 border-t border-[#b0a67f] pt-2">
            <div className="flex h-5 items-center gap-[2px]">
              <CheckBox id="auth-openid" />
              <label htmlFor="auth-openid">Аутентификация OpenID</label>
            </div>
          </div>

          <div className="mt-[10px] border-t border-[#b0a67f] pt-[14px]">
            <div className="flex h-5 items-center gap-[2px]">
              <CheckBox id="protect" checked />
              <label htmlFor="protect">Защита от опасных действий</label>
            </div>
            <div className="mt-[14px] flex h-5 items-center gap-[2px]">
              <CheckBox id="no-restore" checked />
              <label htmlFor="no-restore">Пользователю запрещено восстанавливать пароль</label>
            </div>
          </div>
        </div>

        <div className="mt-[7px] flex justify-end gap-1.5">
          <DialogButton primary>OK</DialogButton>
          <DialogButton>Отмена</DialogButton>
          <DialogButton>Справка</DialogButton>
        </div>
      </div>
    </section>
  );
}

/* ---------- bottom of the window ---------- */

function StatusBar() {
  return (
    <footer className="flex h-7 shrink-0 items-stretch gap-[5px] text-[#3f3000]">
      <p className="flex flex-1 items-center border border-[#dcd7b9] pl-1">Для получения подсказки нажмите F1</p>
      <span className="flex items-center border border-[#dcd7b9] px-[3px] text-base text-[#a8925a]">CAP</span>
      <span className="flex items-center border border-[#dcd7b9] px-1 text-base">NUM</span>
      <button type="button" className="flex items-center gap-1 border border-[#dcd7b9] px-[3px] text-base">
        ru
        <Caret />
      </button>
    </footer>
  );
}

export default function App() {
  return (
    <div className="h-screen min-h-[1000px] bg-white p-1.5 font-['Liberation_Sans',Arial,sans-serif] text-[17px] leading-5">
      <Gradients />
      <div className="h-full bg-[#f6f5f3] px-5 pt-5 pb-[76px] shadow-[0_0_6px_1px_#9a9a9a]">
        <div className="flex h-full flex-col bg-[#f5f2dd]">
          <TitleBar />
          <MenuBar />
          <MainToolbar />
          <ConfigToolbar />
          <main className="flex min-h-0 flex-1 gap-[5px]">
            <ConfigPanel />
            <div className="relative min-w-0 flex-1 overflow-hidden border border-r-2 border-[#e8e5da] border-t-[#9c9c9c] border-l-[#9c9c9c] bg-[#d8d3bd]">
              <UserListWindow />
              <UserDialog />
            </div>
          </main>
          <div className="flex h-8 shrink-0 items-center pl-px">
            <button type="button" className="flex h-7 w-64 items-center border border-[#b0a67f] bg-[#b1cae5] pl-[3px] text-[#333]">
              <UserIcon />
              <span className="ml-1">Список пользователей 2</span>
            </button>
          </div>
          <StatusBar />
        </div>
      </div>
    </div>
  );
}
